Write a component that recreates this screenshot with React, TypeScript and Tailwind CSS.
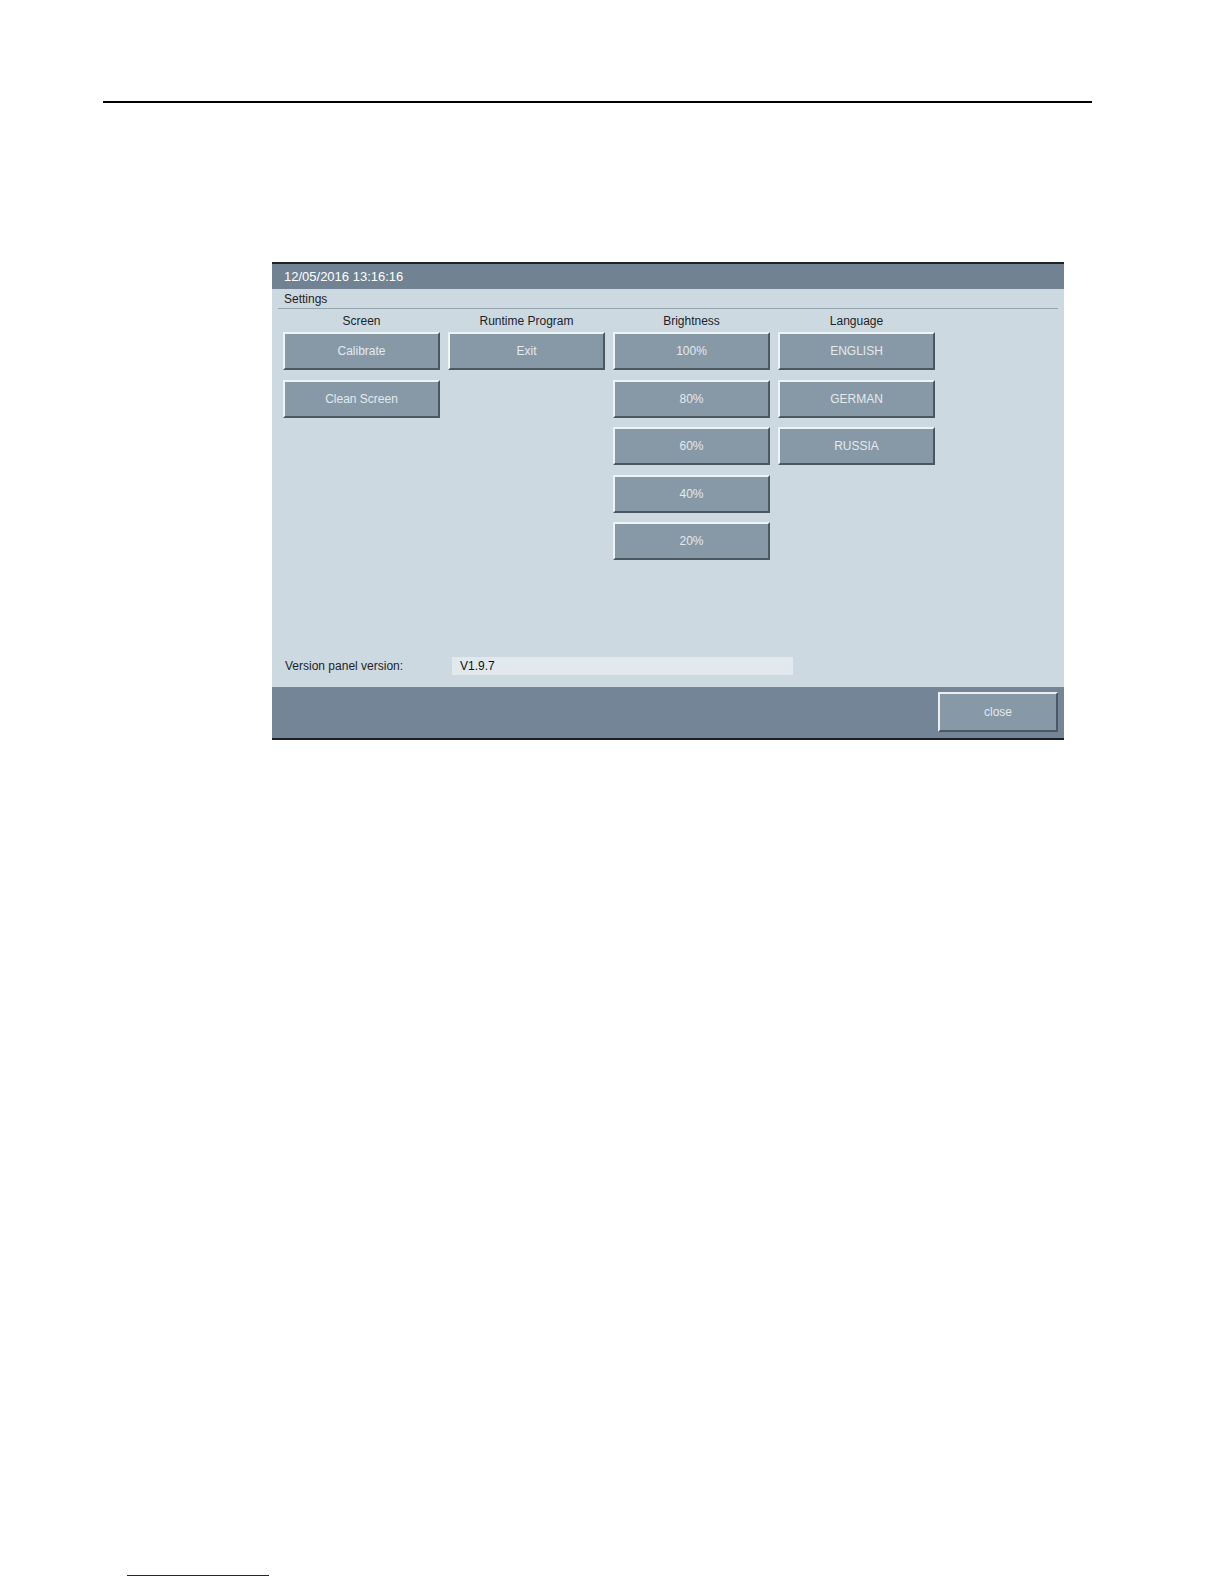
import React from "react";

const font = { fontFamily: '"Liberation Sans", Arial, sans-serif' };

function Btn({ label }: { label: string }) {
  return (
    <div className="h-[38px] w-[157px] flex items-center justify-center bg-[#8799a7] border-t-2 border-l-2 border-t-[#eef3f6] border-l-[#eef3f6] border-b-2 border-r-2 border-b-[#4b5761] border-r-[#4b5761] text-[12px] text-[#e3e9ed]">
      {label}
    </div>
  );
}

function Column({ title, items }: { title: string; items: string[] }) {
  return (
    <div className="flex flex-col w-[157px]">
      <div className="h-[23px] flex items-center justify-center text-[12px] text-[#1e2328]">{title}</div>
      <div className="flex flex-col gap-[9.5px]">
        {items.map((i) => (
          <Btn key={i} label={i} />
        ))}
      </div>
    </div>
  );
}

export default function App() {
  return (
    <div className="w-[1224px] h-[1584px] bg-white flex flex-col" style={font}>
      <div className="mt-[101px] ml-[103px] w-[989px] h-[2px] bg-black" />
      <div className="mt-[159px] ml-[272px] w-[792px] h-[478px] flex flex-col border-t-2 border-b-2 border-[#1c2126]">
        <div className="h-[25px] bg-[#718393] flex items-center px-[12px] text-[13px] text-white">
          12/05/2016 13:16:16
        </div>
        <div className="h-[398px] bg-[#cdd9e0] flex flex-col">
          <div className="h-[19px] flex items-center px-[12px] text-[12px] text-[#1e2328]">Settings</div>
          <div className="mx-[6px] h-px bg-[#96a4ae]" />
          <div className="flex gap-[8px] pl-[11px]">
            <Column title="Screen" items={["Calibrate", "Clean Screen"]} />
            <Column title="Runtime Program" items={["Exit"]} />
            <Column title="Brightness" items={["100%", "80%", "60%", "40%", "20%"]} />
            <Column title="Language" items={["ENGLISH", "GERMAN", "RUSSIA"]} />
          </div>
          <div className="flex-1" />
          <div className="flex items-center mb-[12px] pl-[13px]">
            <div className="w-[167px] text-[12px] text-[#1e2328]">Version panel version:</div>
            <div className="w-[341px] h-[18px] bg-[#e2e9ee] flex items-center px-[8px] text-[12px] text-[#111]">V1.9.7</div>
          </div>
        </div>
        <div className="flex-1 bg-[#738596] flex justify-end items-start pt-[5px] pr-[6px]">
          <div className="w-[120px] h-[40px] flex items-center justify-center bg-[#8798a7] border-2 border-t-[#e8eef2] border-l-[#e8eef2] border-b-[#4b5761] border-r-[#4b5761] text-[12px] text-[#e3e9ed]">
            close
          </div>
        </div>
      </div>
      <div className="mt-[835px] ml-[127px] w-[142px] h-px bg-[#1a1a8c]" />
    </div>
  );
}
